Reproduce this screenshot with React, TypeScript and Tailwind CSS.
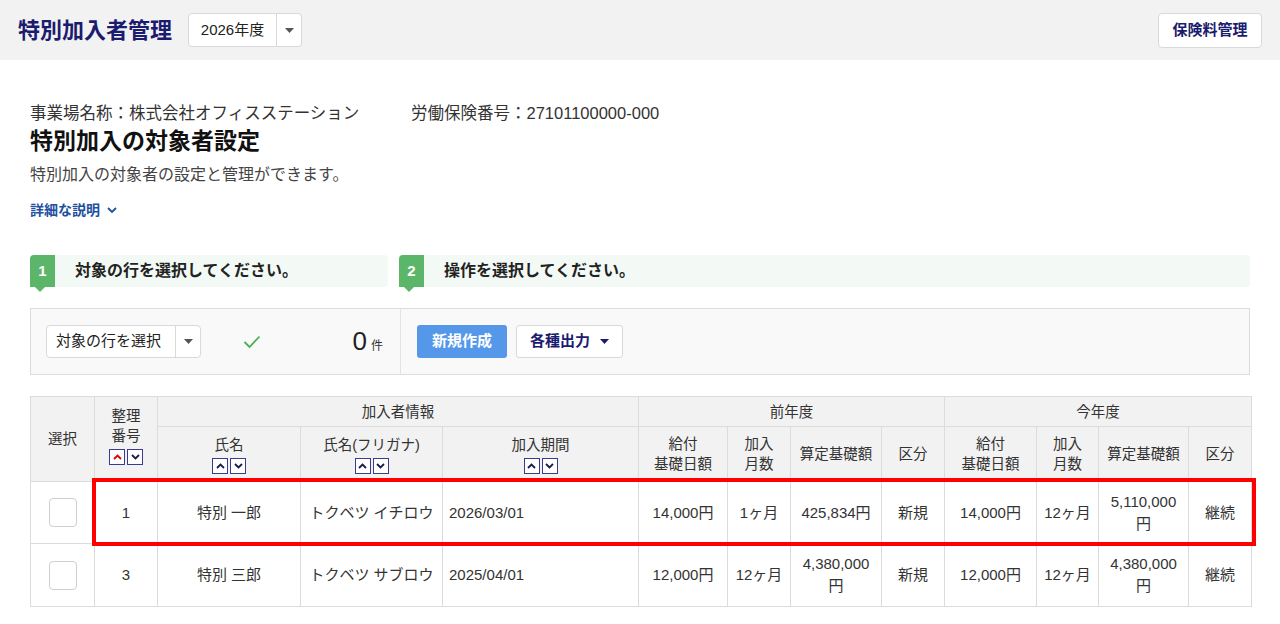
const font = { fontFamily: '"Liberation Sans", "Noto Sans CJK JP", sans-serif' };

function Chevron({ dir, color }: { dir: "up" | "down"; color: string }) {
  return (
    <svg width="9" height="6" viewBox="0 0 9 6" fill="none">
      <path
        d={dir === "up" ? "M1 5 L4.5 1.5 L8 5" : "M1 1 L4.5 4.5 L8 1"}
        stroke={color}
        strokeWidth="1.8"
      />
    </svg>
  );
}

function SortButtons({ activeUp = false }: { activeUp?: boolean }) {
  return (
    <div className="flex justify-center gap-[2px] mt-[3px]">
      <span className="w-[16px] h-[16px] border border-[#3b3b94] bg-white flex items-center justify-center">
        <Chevron dir="up" color={activeUp ? "#e00000" : "#1c1c4a"} />
      </span>
      <span className="w-[16px] h-[16px] border border-[#3b3b94] bg-white flex items-center justify-center">
        <Chevron dir="down" color="#1c1c4a" />
      </span>
    </div>
  );
}

function Caret() {
  return (
    <svg width="9" height="5" viewBox="0 0 9 5">
      <path d="M0 0 L9 0 L4.5 5 Z" fill="#555" />
    </svg>
  );
}

function StepBox({ n, text, className }: { n: number; text: string; className: string }) {
  return (
    <div className={`flex items-center h-[32px] bg-[#f3f9f4] rounded-sm ${className}`}>
      <div className="relative w-[25px] h-full bg-[#5cb66a] rounded-tl-sm flex items-center justify-center text-white font-bold text-[15px]">
        {n}
        <span className="absolute left-[5px] -bottom-[5px] w-0 h-0 border-l-[5px] border-r-[5px] border-t-[5px] border-l-transparent border-r-transparent border-t-[#5cb66a]" />
      </div>
      <span className="ml-[20px] text-[16px] font-bold text-[#222]">{text}</span>
    </div>
  );
}

const rows = [
  {
    no: "1",
    name: "特別 一郎",
    kana: "トクベツ イチロウ",
    period: "2026/03/01",
    prev: ["14,000円", "1ヶ月", "425,834円", "新規"],
    cur: ["14,000円", "12ヶ月", "5,110,000\n円", "継続"],
  },
  {
    no: "3",
    name: "特別 三郎",
    kana: "トクベツ サブロウ",
    period: "2025/04/01",
    prev: ["12,000円", "12ヶ月", "4,380,000\n円", "新規"],
    cur: ["12,000円", "12ヶ月", "4,380,000\n円", "継続"],
  },
];

const th = "border border-[#dcdcdc] bg-[#f2f2f2] font-normal text-[14.5px] text-[#333] leading-[20px]";
const td = "border border-[#dcdcdc] text-[15px] text-[#333] leading-[22px]";

export default function App() {
  return (
    <div className="w-[1280px] h-[624px] bg-white overflow-hidden" style={font}>
      {/* header */}
      <div className="h-[60px] bg-[#f2f2f2] flex items-center justify-between pl-[18px] pr-[18px]">
        <div className="flex items-center">
          <h1 className="text-[22px] font-bold text-[#1b1b6f]">特別加入者管理</h1>
          <div className="ml-[16px] flex h-[34px] bg-white border border-[#d9d9d9] rounded-[4px]">
            <span className="w-[87px] flex items-center justify-center text-[15px] text-[#222]">2026年度</span>
            <span className="w-[25px] border-l border-[#d9d9d9] flex items-center justify-center">
              <Caret />
            </span>
          </div>
        </div>
        <button className="h-[35px] w-[104px] bg-white border border-[#d9d9d9] rounded-[4px] text-[15px] font-bold text-[#1b1b6f]">
          保険料管理
        </button>
      </div>

      <div className="px-[30px] pt-[42px]">
        <div className="flex text-[16.5px] text-[#333] leading-[22px]">
          <span className="w-[381px]">事業場名称：株式会社オフィスステーション</span>
          <span>労働保険番号：27101100000-000</span>
        </div>
        <h2 className="mt-[2px] text-[23px] font-bold text-[#111] leading-[30px]">特別加入の対象者設定</h2>
        <p className="mt-[8px] text-[16px] text-[#444] leading-[22px]">特別加入の対象者の設定と管理ができます。</p>
        <div className="mt-[14px] flex items-center gap-[7px] text-[14px] font-bold text-[#1f4fa0]">
          詳細な説明
          <svg width="10" height="7" viewBox="0 0 10 7" fill="none">
            <path d="M1 1 L5 5 L9 1" stroke="#1f4fa0" strokeWidth="1.8" />
          </svg>
        </div>

        {/* steps */}
        <div className="mt-[34px] flex">
          <StepBox n={1} text="対象の行を選択してください。" className="w-[358px]" />
          <StepBox n={2} text="操作を選択してください。" className="ml-[11px] flex-1" />
        </div>

        {/* control panel */}
        <div className="mt-[21px] h-[67px] bg-[#f9f9f9] border border-[#dcdcdc] flex">
          <div className="w-[370px] border-r border-[#e3e3e3] flex items-center pl-[15px]">
            <div className="flex h-[33px] bg-white border border-[#d9d9d9] rounded-[4px]">
              <span className="w-[128px] flex items-center pl-[9px] text-[15px] text-[#222]">対象の行を選択</span>
              <span className="w-[25px] border-l border-[#d9d9d9] flex items-center justify-center">
                <Caret />
              </span>
            </div>
            <svg className="ml-[42px]" width="18" height="14" viewBox="0 0 18 14" fill="none">
              <path d="M1.5 7 L6.5 12 L16.5 1.5" stroke="#4caf50" strokeWidth="1.8" />
            </svg>
            <span className="ml-auto mr-[17px] flex items-baseline">
              <span className="text-[26px] text-[#222] leading-none">0</span>
              <span className="ml-[4px] text-[12px] text-[#333]">件</span>
            </span>
          </div>
          <div className="flex items-center pl-[16px] gap-[9px]">
            <button className="h-[33px] w-[90px] bg-[#5598ea] rounded-[3px] text-white text-[15px] font-bold">
              新規作成
            </button>
            <button className="h-[33px] w-[107px] bg-white border border-[#d9d9d9] rounded-[3px] text-[15px] font-bold text-[#1b1b6f] flex items-center justify-center gap-[10px]">
              各種出力
              <svg width="9" height="5" viewBox="0 0 9 5">
                <path d="M0 0 L9 0 L4.5 5 Z" fill="#1b1b6f" />
              </svg>
            </button>
          </div>
        </div>

        {/* table */}
        <div className="relative mt-[21px]">
          <table className="w-[1221px] border-collapse table-fixed text-center">
            <colgroup>
              <col className="w-[64px]" />
              <col className="w-[63px]" />
              <col className="w-[143px]" />
              <col className="w-[142px]" />
              <col className="w-[196px]" />
              <col className="w-[89px]" />
              <col className="w-[63px]" />
              <col className="w-[91px]" />
              <col className="w-[63px]" />
              <col className="w-[92px]" />
              <col className="w-[62px]" />
              <col className="w-[90px]" />
              <col className="w-[63px]" />
            </colgroup>
            <thead>
              <tr className="h-[30px]">
                <th rowSpan={2} className={th}>選択</th>
                <th rowSpan={2} className={`${th} align-top pt-[9px]`}>
                  整理
                  <br />
                  番号
                  <SortButtons activeUp />
                </th>
                <th colSpan={3} className={th}>加入者情報</th>
                <th colSpan={4} className={th}>前年度</th>
                <th colSpan={4} className={th}>今年度</th>
              </tr>
              <tr className="h-[55px]">
                <th className={th}>
                  氏名
                  <SortButtons />
                </th>
                <th className={th}>
                  氏名(フリガナ)
                  <SortButtons />
                </th>
                <th className={th}>
                  加入期間
                  <SortButtons />
                </th>
                <th className={th}>給付<br />基礎日額</th>
                <th className={th}>加入<br />月数</th>
                <th className={th}>算定基礎額</th>
                <th className={th}>区分</th>
                <th className={th}>給付<br />基礎日額</th>
                <th className={th}>加入<br />月数</th>
                <th className={th}>算定基礎額</th>
                <th className={th}>区分</th>
              </tr>
            </thead>
            <tbody>
              {rows.map((r, i) => (
                <tr key={i} className={i === 0 ? "h-[62px]" : "h-[63px]"}>
                  <td className={td}>
                    <span className="block mx-auto w-[28px] h-[29px] border border-[#cfcfcf] rounded-[4px] bg-white" />
                  </td>
                  <td className={td}>{r.no}</td>
                  <td className={td}>{r.name}</td>
                  <td className={td}>{r.kana}</td>
                  <td className={`${td} text-left pl-[6px]`}>{r.period}</td>
                  {[...r.prev, ...r.cur].map((v, j) => (
                    <td key={j} className={`${td} whitespace-pre-line`}>
                      {v}
                    </td>
                  ))}
                </tr>
              ))}
            </tbody>
          </table>
          <div className="absolute left-[62px] top-[82px] w-[1164px] h-[68px] border-[4px] border-[#ff0000] pointer-events-none" />
        </div>
      </div>
    </div>
  );
}
